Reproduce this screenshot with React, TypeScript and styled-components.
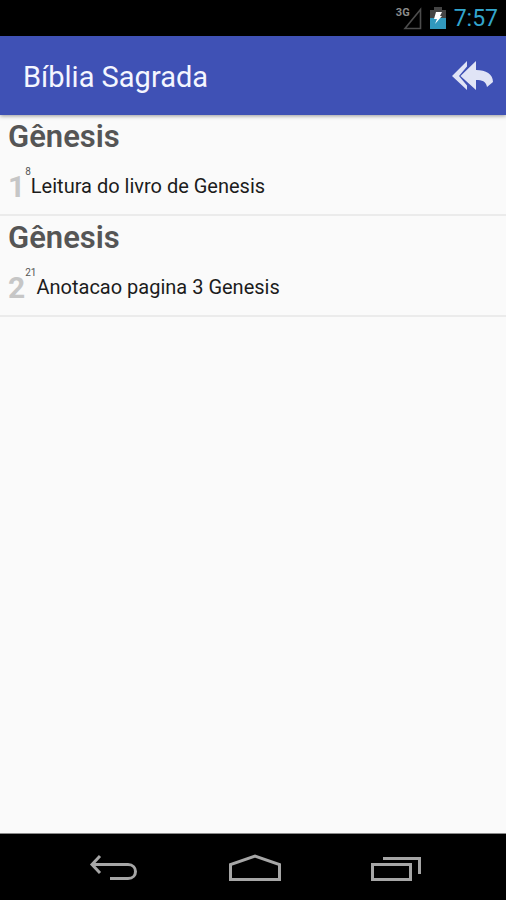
import React from "react";
import styled, { createGlobalStyle } from "styled-components";

const GlobalStyle = createGlobalStyle`
  * { box-sizing: border-box; }
  body { margin: 0; background: #fafafa; font-family: Roboto, "Noto Sans", sans-serif; }
`;

const Screen = styled.div`
  display: flex;
  flex-direction: column;
  min-height: 100vh;
  background: #fafafa;
`;

const StatusBar = styled.div`
  display: flex;
  align-items: center;
  justify-content: flex-end;
  height: 36px;
  padding-right: 8px;
  background: #000;
`;

const StatusIcon = styled.svg`
  display: block;
  margin-right: 8px;
`;

const NetworkLabel = styled.span`
  align-self: flex-start;
  margin-top: 6px;
  color: #8c8c8c;
  font-size: 11px;
  line-height: 14px;
  font-weight: 700;
  margin-right: -8px;
`;

const Clock = styled.time`
  padding-top: 2px;
  color: #33a5cc;
  font-size: 23px;
  line-height: 34px;
`;

const AppBar = styled.header`
  position: relative;
  display: flex;
  align-items: center;
  justify-content: space-between;
  height: 79px;
  padding: 0 12px 0 23px;
  background: #3f51b5;
  box-shadow: 0 1px 4px rgba(0, 0, 0, 0.4);
`;

const Title = styled.h1`
  margin: 0;
  padding-top: 2px;
  color: #f4f6ff;
  font-size: 29px;
  line-height: 36px;
  font-weight: 400;
`;

const IconButton = styled.button`
  display: block;
  padding: 0;
  border: 0;
  background: none;
  cursor: pointer;

  svg { display: block; }
`;

const NoteList = styled.ul`
  flex: 1;
  margin: 0;
  padding: 0;
  list-style: none;
`;

const NoteItem = styled.li`
  padding: 4px 8px 12px;
  border-bottom: 2px solid #ebebeb;
`;

const Book = styled.h2`
  margin: 0;
  color: #555;
  font-size: 31px;
  line-height: 36px;
  font-weight: 600;
`;

const Note = styled.div`
  display: flex;
  align-items: flex-start;
  height: 47px;
`;

const Chapter = styled.span`
  padding-top: 14px;
  color: #c6c6c6;
  font-size: 30px;
  line-height: 36px;
  font-weight: 700;
`;

const Verse = styled.sup`
  padding-top: 11px;
  color: #555;
  font-size: 10px;
  line-height: 12px;
`;

const NoteText = styled.span`
  padding-top: 19px;
  color: #1c1c1c;
  font-size: 20px;
  line-height: 24px;
`;

const NavBar = styled.nav`
  display: flex;
  align-items: center;
  justify-content: center;
  gap: 88px;
  height: 67px;
  padding: 2px 0 0 3px;
  background: #000;
  border-top: 1px solid #8a8a8a;
`;

const notes = [
  { book: "Gênesis", chapter: 1, verse: 8, text: "Leitura do livro de Genesis" },
  { book: "Gênesis", chapter: 2, verse: 21, text: "Anotacao pagina 3 Genesis" },
];

export default function App() {
  return (
    <Screen>
      <GlobalStyle />
      <StatusBar>
        <NetworkLabel>3G</NetworkLabel>
        <StatusIcon width="20" height="24" viewBox="0 0 20 24" aria-hidden="true">
          <path d="M3 22.5H18.5V3.5Z" fill="none" stroke="#4d4d4d" strokeWidth="1.6" />
        </StatusIcon>
        <StatusIcon width="16" height="22" viewBox="0 0 16 22" aria-hidden="true">
          <path d="M0 3H4V0H12V3H16V22H0Z" fill="#444" />
          <path d="M0 11H16V22H0Z" fill="#3198bd" />
          <path d="M6 5L12 5L10 9H12L5 17L7 12H4Z" fill="#fff" />
        </StatusIcon>
        <Clock>7:57</Clock>
      </StatusBar>

      <AppBar>
        <Title>Bíblia Sagrada</Title>
        <IconButton type="button" aria-label="Voltar">
          <svg width="42" height="30" viewBox="0 0 42 30">
            <g fill="#e0e4f6">
              <path d="M15 0V5.500L7 15L15 24.500V29L0 15Z" />
              <path d="M24 0V9C34 9 41 13 41 21L35 26C34 20 30 19 24 19V29L8.500 15Z" />
            </g>
          </svg>
        </IconButton>
      </AppBar>

      <NoteList>
        {notes.map((n) => (
          <NoteItem key={n.chapter}>
            <Book>{n.book}</Book>
            <Note>
              <Chapter>{n.chapter}</Chapter>
              <Verse>{n.verse}</Verse>
              <NoteText>{n.text}</NoteText>
            </Note>
          </NoteItem>
        ))}
      </NoteList>

      <NavBar>
        <IconButton type="button" aria-label="Voltar à tela anterior">
          <svg width="52" height="28" viewBox="0 0 52 28" fill="none" stroke="#a6a6a6" strokeWidth="3">
            <path d="M12 2L4 10.5L12 19M4 10.5H40C50 10.5 50 24.5 40 24.5H22" />
          </svg>
        </IconButton>
        <IconButton type="button" aria-label="Início">
          <svg width="54" height="28" viewBox="0 0 54 28" fill="none" stroke="#a6a6a6" strokeWidth="3">
            <path d="M2.5 25.5V10.5L27 2L51.5 10.5V25.5Z" />
          </svg>
        </IconButton>
        <IconButton type="button" aria-label="Aplicativos recentes">
          <svg width="52" height="28" viewBox="0 0 52 28" fill="none" stroke="#a6a6a6" strokeWidth="3">
            <path d="M2.5 10.5H40.5V25.5H2.5ZM13 4.5H49.5V20" />
          </svg>
        </IconButton>
      </NavBar>
    </Screen>
  );
}
